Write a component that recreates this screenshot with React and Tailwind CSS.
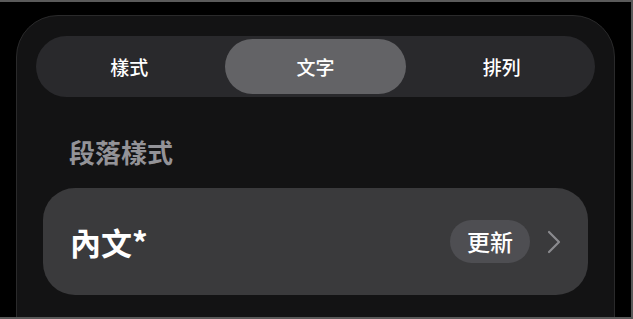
export default function App() {
  const font = { fontFamily: '"Noto Sans CJK TC", "Noto Sans", sans-serif' };
  return (
    <div
      className="w-[633px] h-[319px] bg-black border-t-2 border-r-2 border-b-2 border-[#5a5a5a] overflow-hidden px-[16px] pt-[13px]"
      style={font}
    >
      <div className="h-[320px] rounded-t-[42px] border border-[#2a2a2b] bg-[#131314] px-[19px] pt-[20px]">
        <div className="h-[61px] rounded-full bg-[#29292c] grid grid-cols-3">
          <div className="flex items-center justify-center text-[19px] font-medium text-white leading-none">樣式</div>
          <div className="flex items-center justify-center m-[3px] rounded-full bg-[#636366] text-[19px] font-medium text-white leading-none">文字</div>
          <div className="flex items-center justify-center text-[19px] font-medium text-white leading-none">排列</div>
        </div>
        <div className="mt-[42px] pl-[33px] text-[26px] leading-[26px] font-semibold text-[#939398]">段落樣式</div>
        <div className="mt-[23px] mx-[7px] h-[107px] rounded-[32px] bg-[#3a3a3c] flex items-center pl-[27px] pr-[27px]">
          <div className="text-[31px] leading-none font-bold text-white">內文*</div>
          <div className="ml-auto h-[43px] px-[17px] rounded-full bg-[#4e4e52] flex items-center text-[23px] font-medium text-white leading-none">更新</div>
          <svg className="ml-[17px]" width="14" height="24" viewBox="0 0 14 24" fill="none">
            <polyline points="2,2 12,12 2,22" stroke="#8a8a8e" strokeWidth="2.2" strokeLinecap="round" strokeLinejoin="round" />
          </svg>
        </div>
      </div>
    </div>
  );
}
